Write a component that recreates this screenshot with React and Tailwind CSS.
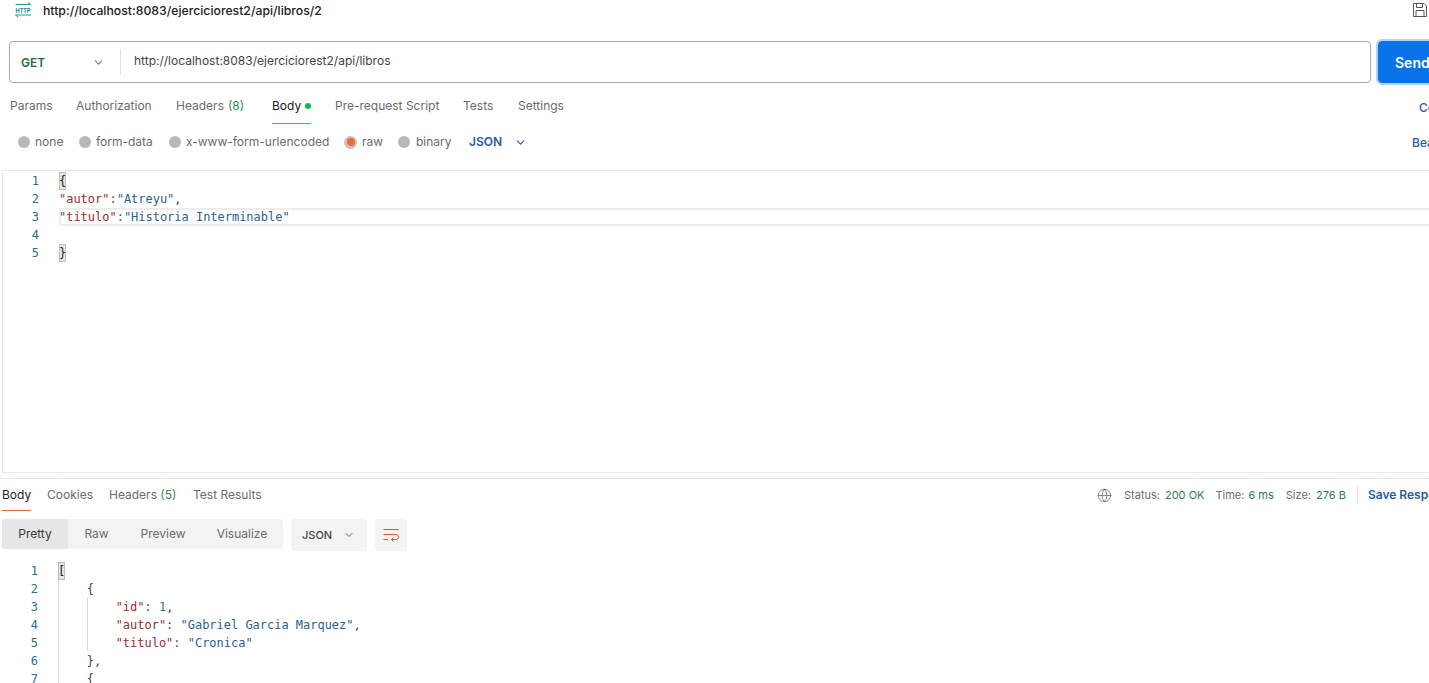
import React from 'react';
import { ChevronDown, Globe } from 'lucide-react';

const requestTabs = [
  { label: 'Params', cls: 'w-[66px]' },
  { label: 'Authorization', cls: 'w-[100px]' },
  { label: 'Headers', count: '(8)', cls: 'w-[96px]' },
  { label: 'Body', dot: true, active: true, cls: 'w-[63px]' },
  { label: 'Pre-request Script', cls: 'w-[128px]' },
  { label: 'Tests', cls: 'w-[55px]' },
  { label: 'Settings', cls: 'w-[60px]' },
];

const bodyTypes = [
  { label: 'none', cls: 'w-[61px] gap-[5px]' },
  { label: 'form-data', cls: 'w-[90px] gap-[5px]' },
  { label: 'x-www-form-urlencoded', cls: 'w-[175px] gap-[5px]' },
  { label: 'raw', active: true, cls: 'w-[54px] gap-[5px]' },
  { label: 'binary', cls: 'w-[71px] gap-[6px]' },
];

const K = ({ children }) => <span className="text-[#9c2b2b]">{children}</span>;
const S = ({ children }) => <span className="text-[#2a5f93]">{children}</span>;
const P = ({ children }) => <span className="text-[#444]">{children}</span>;

const Bracket = ({ children }) => (
  <span className="inline-block h-[18px] bg-[#e8e8e0] outline outline-1 -outline-offset-1 outline-[#bbb] text-[#222]">{children}</span>
);

const CodeLine = ({ n, children, highlight }) => (
  <div className="flex h-[18px] leading-[18px]">
    <div className="w-[37px] shrink-0 text-right text-[#2a6f8f]">{n}</div>
    <div className={`ml-[20px] flex-1 whitespace-pre ${highlight ? 'outline outline-2 -outline-offset-2 outline-[#ececec]' : ''}`}>{children}</div>
  </div>
);

const WrapIcon = () => (
  <svg width="16" height="14" viewBox="0 0 16 14" fill="none" stroke="#d9582b" strokeWidth="1">
    <path d="M0.5 1.5H15.5M0.5 6.5H13a2.3 2.3 0 0 1 0 5H8.5M10.5 9.5l-2 2 2 2M0.5 11.5H5" />
  </svg>
);

const SaveIcon = () => (
  <svg className="mb-[2px]" width="14" height="14" viewBox="0 0 14 14" fill="none" stroke="#555" strokeWidth="1">
    <path d="M0.5 0.5H11L13.5 3V13.5H0.5ZM3.5 0.5V4.5H9.5V0.5M3 13.5V7.5H11V13.5" />
  </svg>
);

const HttpIcon = () => (
  <svg width="16" height="18" viewBox="0 0 16 18" fill="none" stroke="#2c8f9c" strokeWidth="1">
    <path d="M0.5 2.5H15.5M13 0.5L15.5 2.5M0.5 13H16M3 15L0.5 13" />
    <text x="0.5" y="10.5" fontSize="8" fontWeight="700" fontFamily="Liberation Sans, sans-serif" fill="#1f8494" stroke="none" textLength="15" lengthAdjust="spacingAndGlyphs">HTTP</text>
  </svg>
);

export default function App() {
  return (
    <div className="w-[1429px] h-[683px] overflow-hidden bg-white font-['Inter',sans-serif] text-[12px] text-[#6b6b6b]">
      {/* title */}
      <div className="flex items-center h-[22px] pl-[15px] pr-[2px]">
        <HttpIcon />
        <span className="ml-[12px] text-[12.25px] text-[#212121] font-medium">http://localhost:8083/ejerciciorest2/api/libros/2</span>
        <span className="ml-auto"><SaveIcon /></span>
      </div>

      {/* url bar */}
      <div className="flex mt-[19px] pl-[9px] w-[1480px]">
        <div className="flex items-center w-[1362px] h-[42px] border border-[#a8a8a8] rounded-[4px]">
          <span className="ml-[11px] w-[71px] pt-[1px] text-[#216c41] font-semibold">GET</span>
          <ChevronDown size={13} color="#777" />
          <div className="ml-[15px] h-[26px] w-px bg-[#e2e2e2]" />
          <span className="ml-[13px] pb-[2px] text-[#444]">http://localhost:8083/ejerciciorest2/api/libros</span>
        </div>
        <div className="ml-[7px] w-[90px] h-[42px] pl-[17px] flex items-center rounded-[4px] bg-[#0a72e8] outline outline-2 outline-[#b6d2f2] text-[14px] font-semibold text-white">Send</div>
      </div>

      {/* request tabs */}
      <div className="relative flex h-[39px] pl-[10px]">
        {requestTabs.map((t) => (
          <div key={t.label} className={`${t.cls} pt-[14px]`}>
            <div className={`inline-flex items-center h-[25px] pb-[9px] ${t.active ? 'border-b border-[#e0693b] text-[#212121]' : ''}`}>
              {t.label}
              {t.count && <span className="ml-1 text-[#2f8a55]">{t.count}</span>}
              {t.dot && <span className="ml-[4px] w-[6px] h-[6px] rounded-full bg-[#0cbb52]" />}
            </div>
          </div>
        ))}
        <span className="absolute left-[1419px] top-[16px] text-[#2a5aa8] font-medium">Cookies</span>
      </div>

      {/* body types */}
      <div className="relative flex items-center h-[32px] mt-[4px] pl-[18px]">
        {bodyTypes.map((b) => (
          <div key={b.label} className={`flex items-center ${b.cls}`}>
            <span className={`flex items-center justify-center rounded-full ${b.active ? 'w-[13px] h-[13px] bg-[#c4c4c4]' : 'w-[12px] h-[12px] bg-[#b8b8b8]'}`}>
              {b.active && <span className="w-[8px] h-[8px] rounded-full bg-[#f0683a]" />}
            </span>
            <span>{b.label}</span>
          </div>
        ))}
        <span className="text-[#2a5aa8] font-semibold">JSON</span>
        <ChevronDown className="ml-[12px]" size={13} color="#2a5aa8" />
        <span className="absolute left-[1412px] top-[8px] text-[#2a5aa8] font-medium whitespace-nowrap">Beautify</span>
      </div>

      {/* editor */}
      <div className="mt-[12px] ml-[2px] w-[1440px] h-[303px] pt-[1px] border border-[#e8e8e8] font-['DejaVu_Sans_Mono',monospace] text-[11.97px]">
        <div className="-ml-[1px]">
          <CodeLine n={1}><Bracket>{'{'}</Bracket></CodeLine>
          <CodeLine n={2}><K>"autor"</K><P>:</P><S>"Atreyu"</S><P>,</P></CodeLine>
          <CodeLine n={3} highlight><K>"titulo"</K><P>:</P><S>"Historia Interminable"</S></CodeLine>
          <CodeLine n={4}>{' '}</CodeLine>
          <CodeLine n={5}><Bracket>{'}'}</Bracket></CodeLine>
        </div>
      </div>

      <div className="mt-[5px] h-[1px] bg-[#e8e8e8]" />

      {/* response header */}
      <div className="relative flex items-center h-[32px] pl-[2px]">
        <div className="flex">
          <div className="w-[45px]"><span className="inline-block h-[32px] leading-[32px] border-b border-[#e0693b] text-[#212121]">Body</span></div>
          <div className="w-[62px] leading-[32px]">Cookies</div>
          <div className="w-[84px] leading-[32px]">Headers <span className="text-[#2f8a55]">(5)</span></div>
          <div className="leading-[32px]">Test Results</div>
        </div>
        <div className="ml-auto flex items-center shrink-0 w-[332px] text-[11px] whitespace-nowrap">
          <Globe className="shrink-0" size={15} strokeWidth={1.2} color="#666" />
          <span className="ml-[12px] shrink-0">Status:</span>
          <span className="ml-[5px] shrink-0 text-[#2f7d55]">200 OK</span>
          <span className="ml-[11px] shrink-0">Time:</span>
          <span className="ml-[4px] shrink-0 text-[#2f7d55]">6 ms</span>
          <span className="ml-[12px] shrink-0">Size:</span>
          <span className="ml-[5px] shrink-0 text-[#2f7d55]">276 B</span>
          <span className="ml-[11px] h-[18px] w-px shrink-0 bg-[#e2e2e2]" />
          <span className="ml-[10px] shrink-0 text-[12px] text-[#2a5aa8] font-semibold">Save Response</span>
        </div>
      </div>

      {/* response toolbar */}
      <div className="flex mt-[8px] pl-[2px]">
        <div className="flex items-center w-[281px] h-[30px] rounded-[3px] bg-[#f3f3f3] overflow-hidden">
          <div className="flex items-center justify-center w-[66px] h-full shrink-0 bg-[#e6e6e6] text-[#3a3a3a]">Pretty</div>
          <div className="w-[57px] shrink-0 text-center">Raw</div>
          <div className="w-[76px] shrink-0 text-center">Preview</div>
          <div className="w-[82px] shrink-0 text-center">Visualize</div>
        </div>
        <div className="flex items-center ml-[8px] w-[76px] h-[32px] pl-[11px] rounded-[3px] bg-[#f3f3f3] text-[11px] font-medium text-[#444]">
          JSON
          <ChevronDown className="ml-[11px]" size={12} color="#666" />
        </div>
        <div className="flex items-center justify-center ml-[8px] w-[32px] h-[32px] rounded-[3px] bg-[#f3f3f3]">
          <WrapIcon />
        </div>
      </div>

      {/* response code */}
      <div className="relative mt-[11px] pl-[1px] h-[122px] overflow-hidden font-['DejaVu_Sans_Mono',monospace] text-[11.97px]">
        <div className="absolute left-[58px] top-[18px] bottom-0 w-px bg-[#d8d8d8]" />
        <div className="absolute left-[87px] top-[36px] h-[53px] w-px bg-[#d8d8d8]" />
        <CodeLine n={1}><Bracket>[</Bracket></CodeLine>
        <CodeLine n={2}>{'    '}<P>{'{'}</P></CodeLine>
        <CodeLine n={3}>{'        '}<K>"id"</K><P>: </P><span className="text-[#2f7d62]">1</span><P>,</P></CodeLine>
        <CodeLine n={4}>{'        '}<K>"autor"</K><P>: </P><S>"Gabriel Garcia Marquez"</S><P>,</P></CodeLine>
        <CodeLine n={5}>{'        '}<K>"titulo"</K><P>: </P><S>"Cronica"</S></CodeLine>
        <CodeLine n={6}>{'    '}<P>{'},'}</P></CodeLine>
        <CodeLine n={7}>{'    '}<P>{'{'}</P></CodeLine>
      </div>
    </div>
  );
}
